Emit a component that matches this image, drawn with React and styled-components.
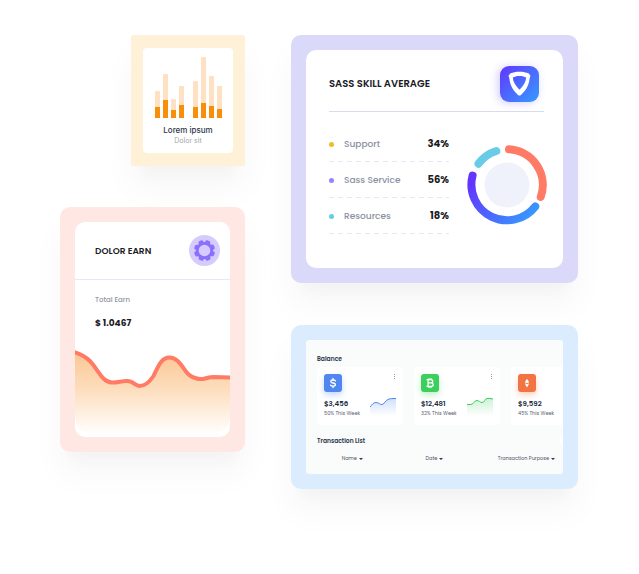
import React from "react";
import styled, { createGlobalStyle } from "styled-components";

const GlobalStyle = createGlobalStyle`
  *, *::before, *::after { box-sizing: border-box; }
  body {
    margin: 0;
    background: #ffffff;
    color: #1f2024;
    font-family: Poppins, Inter, "Open Sans", sans-serif;
  }
  h2, h3, p, ul, dl, dd, dt { margin: 0; padding: 0; }
`;

const Page = styled.main`
  display: grid;
  grid-template-columns: minmax(0, 185fr) minmax(0, 287fr);
  gap: 46px;
  align-items: start;
  padding: 35px 61px 85px 60px;
`;

const Column = styled.div`
  display: flex;
  flex-direction: column;
  align-items: ${(p) => p.$align || "stretch"};
  gap: ${(p) => p.$gap || "42px"};
`;

const Frame = styled.section`
  width: ${(p) => p.$width || "100%"};
  padding: ${(p) => p.$pad || "15px"};
  border-radius: ${(p) => p.$radius || "10px"};
  background: ${(p) => p.$tone};
  box-shadow:
    0 20px 12px -10px rgba(0, 0, 0, 0.02),
    0 22px 32px 2px rgba(0, 0, 0, 0.03);
`;

const Panel = styled.div`
  background: ${(p) => p.$bg || "#ffffff"};
  border-radius: ${(p) => p.$radius || "10px"};
  overflow: hidden;
`;

/* Bar chart card */

const BarBody = styled(Panel)`
  display: flex;
  flex-direction: column;
  align-items: center;
  padding: 9px 0 7px;
`;

const Bars = styled.div`
  display: flex;
  align-items: flex-end;
  gap: 3px;
  height: 61px;
  margin-bottom: 6px;
`;

const Bar = styled.div`
  display: flex;
  align-items: flex-end;
  width: 5px;
  height: ${(p) => p.$total}px;
  margin-left: ${(p) => (p.$split ? "6px" : "0")};
  border-radius: 1px;
  background: #fde1c2;

  &::after {
    content: "";
    width: 100%;
    height: ${(p) => p.$part}px;
    background: #f78f0a;
  }
`;

const BarTitle = styled.h2`
  font: 500 8px/12px Inter, sans-serif;
  color: #2b3448;
`;

const BarNote = styled.p`
  font: 400 7px/10px Inter, sans-serif;
  color: #a3a6ae;
`;

const bars = [
  [27, 11], [44, 18], [19, 8], [32, 13],
  [37, 11], [61, 15], [42, 12], [32, 9],
];

function BarCard() {
  return (
    <Frame $tone="#fff0d8" $width="114px" $pad="13px 12px" $radius="3px">
      <BarBody $radius="4px">
        <Bars>
          {bars.map(([total, part], i) => (
            <Bar key={i} $total={total} $part={part} $split={i === 4} />
          ))}
        </Bars>
        <BarTitle>Lorem ipsum</BarTitle>
        <BarNote>Dolor sit</BarNote>
      </BarBody>
    </Frame>
  );
}

/* Earnings card */

const EarnHeader = styled.header`
  display: flex;
  align-items: center;
  justify-content: space-between;
  height: 58px;
  padding: 0 10px 0 20px;
  border-bottom: 1px solid #e6e8f5;
`;

const CardTitle = styled.h2`
  font-size: ${(p) => p.$size || "9px"};
  line-height: 14px;
  font-weight: 600;
  color: #1b1c1f;
`;

const EarnFigures = styled.dl`
  padding: 14px 20px 18px;
`;

const EarnLabel = styled.dt`
  font-size: 7px;
  line-height: 12px;
  font-weight: 500;
  color: #8f95a5;
`;

const EarnValue = styled.dd`
  padding-top: 10px;
  font-size: 9px;
  line-height: 14px;
  font-weight: 700;
  color: #1b1c1f;
`;

const AreaChart = styled.svg`
  display: block;
  width: 100%;
  height: 89px;
`;

function GearIcon() {
  return (
    <svg width="31" height="31" viewBox="0 0 31 31" aria-hidden="true">
      <circle cx="15.5" cy="15.5" r="15.5" fill="#d5ccfd" />
      <g fill="#8a70fb">
        <circle cx="15.5" cy="15.5" r="8.6" />
        {[22, 67, 112, 157, 202, 247, 292, 337].map((a) => (
          <path
            key={a}
            d="M12.4 9.2 L13.1 5.8 Q13.4 5 14.2 5 L16.8 5 Q17.6 5 17.9 5.8 L18.6 9.2 Z"
            transform={`rotate(${a} 15.5 15.5)`}
          />
        ))}
      </g>
      <circle cx="15.5" cy="15.5" r="5.8" fill="#d5ccfd" />
    </svg>
  );
}

const earnCurve =
  "M-1 4 C6 6 11 9 15 13 C23 21 27 34 37 34.500 C44 35 51 31 57 34 C60 36 62 38 65 38 C70 38 75 34 79 28 C84 18 87 9.500 95 9.500 C105 9.500 109 22 115 27 C120 30.500 124 31.500 129 31 C134 30 134 29 140 29 L157 29.500";

function EarnCard() {
  return (
    <Frame $tone="#ffe7e3">
      <Panel>
        <EarnHeader>
          <CardTitle>DOLOR EARN</CardTitle>
          <GearIcon />
        </EarnHeader>
        <EarnFigures>
          <EarnLabel>Total Earn</EarnLabel>
          <EarnValue>$ 1.0467</EarnValue>
        </EarnFigures>
        <AreaChart viewBox="0 0 156 89" preserveAspectRatio="none" role="img" aria-label="Earnings trend">
          <defs>
            <linearGradient id="earnFill" x1="0" y1="0" x2="0" y2="1">
              <stop offset="0" stopColor="#fbc592" />
              <stop offset="0.5" stopColor="#fde0c2" />
              <stop offset="1" stopColor="#ffffff" />
            </linearGradient>
          </defs>
          <path d={`${earnCurve} V66 Q155 86 135 86 H20 Q0 86 0 66 Z`} fill="url(#earnFill)" />
          <path d={earnCurve} fill="none" stroke="#ff7b66" strokeWidth="4" />
        </AreaChart>
      </Panel>
    </Frame>
  );
}

/* Skill average card */

const SkillPanel = styled(Panel)`
  padding: 16px 16px 34px 23px;
`;

const SkillHeader = styled.header`
  display: flex;
  align-items: center;
  justify-content: space-between;
  height: 46px;
  margin-right: 3px;
  padding: 0 5px 10px 0;
  border-bottom: 1px solid #d9dcee;
`;

const ShieldBadge = styled.span`
  display: flex;
  align-items: center;
  justify-content: center;
  width: 39px;
  height: 36px;
  border-radius: 9px;
  background: linear-gradient(135deg, #6236ff, #359cff);
  box-shadow: -2px 1px 8px rgba(98, 70, 255, 0.28);
`;

const SkillContent = styled.div`
  display: flex;
  align-items: center;
  justify-content: space-between;
  gap: 18px;
  padding-top: 14px;
`;

const SkillList = styled.ul`
  flex: 1;
  max-width: 160px;
  list-style: none;
`;

const SkillRow = styled.li`
  display: flex;
  align-items: center;
  height: 36px;
  font-size: 9px;
  font-weight: 500;
  color: #8b91a2;
  background: repeating-linear-gradient(90deg, #e6e7f5 0 5px, transparent 5px 9px)
    left bottom / 100% 1px no-repeat;

  &::before {
    content: "";
    width: 5px;
    height: 5px;
    margin-right: 10px;
    border-radius: 50%;
    background: ${(p) => p.$dot};
  }
`;

const Percent = styled.strong`
  margin-left: auto;
  font-size: 10px;
  font-weight: 700;
  color: #1b1c1f;
`;

const Donut = styled.svg`
  flex: none;
  width: 80px;
  height: 80px;
  margin-top: 10px;
`;

const skills = [
  ["Support", "34%", "#f2bb29"],
  ["Sass Service", "56%", "#9a83fa"],
  ["Resources", "18%", "#65cde6"],
];

function SkillCard() {
  return (
    <Frame $tone="#dad9f9">
      <SkillPanel>
        <SkillHeader>
          <CardTitle $size="10px">SASS SKILL AVERAGE</CardTitle>
          <ShieldBadge>
            <svg width="23" height="25" viewBox="0 0 23 25" aria-hidden="true">
              <path
                fillRule="evenodd"
                fill="#ffffff"
                d="M11.500 0.800 C15 0.800 18 1.400 20.500 2.300 L22.500 4.800 L21.600 7.500 C21 14.500 17.500 20 12.700 24.200 Q11.500 25 10.300 24.200 C5.500 20 2 14.500 1.400 7.500 L0.500 4.800 L2.500 2.300 C5 1.400 8 0.800 11.500 0.800 Z M11.500 5 C8.500 5 6.500 5.600 4.800 6.600 C5.100 11 7.500 15 11.500 18.800 C15.500 15 17.900 11 18.200 6.600 C16.500 5.600 14.500 5 11.500 5 Z"
              />
            </svg>
          </ShieldBadge>
        </SkillHeader>
        <SkillContent>
          <SkillList>
            {skills.map(([label, value, dot]) => (
              <SkillRow key={label} $dot={dot}>
                {label}
                <Percent>{value}</Percent>
              </SkillRow>
            ))}
          </SkillList>
          <Donut viewBox="0 0 80 80" role="img" aria-label="Skill shares">
            <defs>
              <linearGradient id="arcBlue" x1="0" y1="0.2" x2="1" y2="0.8">
                <stop offset="0" stopColor="#6236ff" />
                <stop offset="1" stopColor="#3797ff" />
              </linearGradient>
            </defs>
            <circle cx="40" cy="40" r="22.5" fill="#eff2fa" />
            <g fill="none" strokeWidth="8" strokeLinecap="round">
              <path d="M42 4.300 A35.700 35.700 0 0 1 73.700 52" stroke="#ff7b66" />
              <path d="M68.300 61.500 A35.700 35.700 0 0 1 5.600 30.500" stroke="url(#arcBlue)" />
              <path d="M11.500 18.700 A35.700 35.700 0 0 1 29.300 6" stroke="#68cce8" />
            </g>
          </Donut>
        </SkillContent>
      </SkillPanel>
    </Frame>
  );
}

/* Balance card */

const BalancePanel = styled(Panel)`
  padding: 13px 0 10px;
`;

const SmallHeading = styled.h3`
  font-size: 6px;
  line-height: 12px;
  font-weight: 600;
  color: #28344a;
`;

const BalanceHead = styled.div`
  display: flex;
  align-items: center;
  justify-content: space-between;
  padding-left: 11px;
  overflow: hidden;
`;

const EdgeButton = styled.button`
  flex: none;
  width: 9px;
  height: 9px;
  margin-right: -6px;
  padding: 0;
  border: 0;
  border-radius: 50%;
  background: #ffffff;
`;

const Wallets = styled.div`
  display: flex;
  gap: 11px;
  padding: 2px 0 10px 11px;
  overflow: hidden;
`;

const Wallet = styled.article`
  flex: none;
  display: grid;
  grid-template-columns: 1fr 26px;
  width: 86px;
  height: 58px;
  padding: 7px 7px 6px;
  border-radius: 4px;
  background: #ffffff;
`;

const CoinIcon = styled.span`
  display: flex;
  align-items: center;
  justify-content: center;
  width: 18px;
  height: 18px;
  border-radius: 3px;
  background: ${(p) => p.$color};
  box-shadow: 0 3px 6px ${(p) => p.$color}55;
`;

const MoreButton = styled.button`
  justify-self: end;
  align-self: start;
  display: flex;
  padding: 0;
  border: 0;
  background: none;
`;

const WalletText = styled.div`
  grid-column: 1;
  align-self: end;
  white-space: nowrap;
`;

const Amount = styled.p`
  font-size: 7px;
  line-height: 11px;
  font-weight: 600;
  color: #202b40;
`;

const Change = styled.p`
  font-size: 5px;
  line-height: 10px;
  font-weight: 400;
  color: #596273;
`;

const Spark = styled.svg`
  align-self: end;
  margin-bottom: 3px;
`;

const Table = styled.table`
  width: 100%;
  margin-top: 7px;
  border-collapse: collapse;
  table-layout: fixed;
  font-size: 5px;
  line-height: 10px;
`;

const HeadCell = styled.th`
  width: ${(p) => p.$width};
  height: 10px;
  padding: ${(p) => (p.$align === "right" ? "0 8px 0 0" : "0")};
  text-align: ${(p) => p.$align};
`;

const SortButton = styled.button`
  display: inline-flex;
  align-items: center;
  gap: 2px;
  padding: 0;
  border: 0;
  background: none;
  font: inherit;
  font-weight: 400;
  white-space: nowrap;
  vertical-align: top;
  color: #4c5566;

  &::after {
    content: "";
    border: 2px solid transparent;
    border-top-color: #28344a;
    border-bottom-width: 0;
  }
`;

const coins = {
  dollar: (
    <g fill="none" stroke="#ffffff" strokeWidth="1.300" strokeLinecap="round">
      <path d="M7.500 3.900 Q6.800 3 5 3 Q2.800 3 2.800 4.500 Q2.800 5.700 5 6 Q7.400 6.300 7.400 7.700 Q7.400 9.200 5 9.200 Q3.200 9.200 2.500 8.100" />
      <path d="M5 1.500 V3 M5 9.200 V10.700" />
    </g>
  ),
  bitcoin: (
    <g fill="none" stroke="#ffffff" strokeWidth="1.300">
      <path d="M1.500 2.700 H5.700 Q7.700 2.700 7.700 4.300 Q7.700 5.900 5.700 5.900 H3.200 M5.700 5.900 Q8.200 5.900 8.200 7.700 Q8.200 9.400 5.900 9.400 H1.500 M3.100 2.700 V9.400 M4 1.200 V2.700 M6 1.200 V2.700 M4 9.400 V10.900 M6 9.400 V10.900" />
    </g>
  ),
  ether: (
    <g fill="#ffffff">
      <path d="M5 1.800 L7.200 5.200 L5 6.300 L2.800 5.200 Z" />
      <path d="M5 10.500 L2.900 6.800 V6.200 L5 7.300 L7.100 6.200 V6.800 Z" />
    </g>
  ),
};

const wallets = [
  {
    id: "dollar", amount: "$3,456", change: "50% This Week", color: "#4f86ef",
    line: "M0 10 C2 8 3 5.500 6 5.500 C9 5.500 10 8 12 7.500 C15 7 15 3 19 2 Q21 1.500 26 1.500",
  },
  {
    id: "bitcoin", amount: "$12,481", change: "32% This Week", color: "#3ccf5e",
    line: "M0 7.500 H4 C7 7 7 3.500 10 3.500 C12 3.500 13 5.500 15 5.500 C18 5.500 17 2 20 1.500 Q23 1 26 2",
  },
  {
    id: "ether", amount: "$9,592", change: "45% This Week", color: "#f37443",
    line: "M0 8 C6 2 12 9 26 3",
  },
];

function BalanceCard() {
  return (
    <Frame $tone="#dbecff">
      <BalancePanel $bg="#fafbfb" $radius="3px">
        <BalanceHead><SmallHeading>Balance</SmallHeading></BalanceHead>
        <Wallets>
          {wallets.map((w) => (
            <Wallet key={w.id}>
              <CoinIcon $color={w.color}>
                <svg width="10" height="12" viewBox="0 0 10 12" aria-hidden="true">{coins[w.id]}</svg>
              </CoinIcon>
              <MoreButton aria-label="More options">
                <svg width="2" height="6" viewBox="0 0 2 6" fill="#9aa1ae" aria-hidden="true">
                  <rect width="1" height="1" />
                  <rect y="2" width="1" height="1" />
                  <rect y="4" width="1" height="1" />
                </svg>
              </MoreButton>
              <WalletText>
                <Amount>{w.amount}</Amount>
                <Change>{w.change}</Change>
              </WalletText>
              <Spark width="26" height="19" viewBox="0 0 26 19" aria-hidden="true">
                <defs>
                  <linearGradient id={`spark-${w.id}`} x1="0" y1="0" x2="0" y2="1">
                    <stop offset="0" stopColor={w.color} stopOpacity="0.260" />
                    <stop offset="1" stopColor={w.color} stopOpacity="0" />
                  </linearGradient>
                </defs>
                <path d={`${w.line} V19 H0 Z`} fill={`url(#spark-${w.id})`} />
                <path d={w.line} fill="none" stroke={w.color} strokeWidth="1" />
              </Spark>
            </Wallet>
          ))}
        </Wallets>
        <BalanceHead>
          <SmallHeading>Transaction List</SmallHeading>
          <EdgeButton aria-label="Next" />
        </BalanceHead>
        <Table>
          <thead>
            <tr>
              <HeadCell $width="36%" $align="center"><SortButton>Name</SortButton></HeadCell>
              <HeadCell $width="28%" $align="center"><SortButton>Date</SortButton></HeadCell>
              <HeadCell $width="36%" $align="right"><SortButton>Transaction Purpose</SortButton></HeadCell>
            </tr>
          </thead>
        </Table>
      </BalancePanel>
    </Frame>
  );
}

export default function App() {
  return (
    <>
      <GlobalStyle />
      <Page>
        <Column $align="flex-end" $gap="41px">
          <BarCard />
          <EarnCard />
        </Column>
        <Column>
          <SkillCard />
          <BalanceCard />
        </Column>
      </Page>
    </>
  );
}
